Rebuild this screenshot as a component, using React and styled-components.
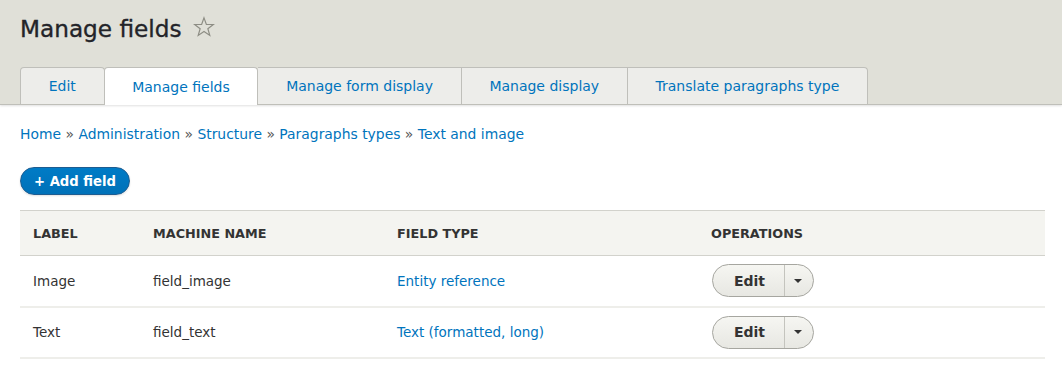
import React from "react";
import styled, { createGlobalStyle } from "styled-components";

const Global = createGlobalStyle`
  html, body { margin: 0; padding: 0; background: #fff; }
  body {
    font-family: "DejaVu Sans", "Liberation Sans", sans-serif;
    color: #222330;
    font-size: 14px;
  }
  * { box-sizing: border-box; }
`;

const Header = styled.header`
  background: #e0e0d8;
  border-bottom: 1px solid #bfbfb9;
  box-shadow: 0 1px 2px rgba(0,0,0,0.12);
  padding: 0 17px 0 20px;
`;

const TitleRow = styled.div`
  display: flex;
  align-items: center;
  gap: 11px;
  height: 56px;
`;

const Title = styled.h1`
  margin: 0;
  font-size: 23.2px;
  font-weight: normal;
  color: #232429;
  -webkit-text-stroke: 0.35px #232429;
`;

const StarBtn = styled.span`
  display: inline-flex;
  width: 22px;
  height: 22px;
  margin-top: -2px;
`;

const Tabs = styled.ul`
  list-style: none;
  margin: 11px 0 0;
  padding: 0;
  display: flex;
  align-items: flex-end;
`;

const Tab = styled.li`
  height: 37px;
  display: flex;
  align-items: center;
  justify-content: center;
  padding: 0 27.7px;
  background: ${p => (p.$active ? "#fff" : "#ededea")};
  border: 1px solid #bfbfba;
  border-bottom: none;
  border-left-width: ${p => (p.$first ? "1px" : "0")};
  border-radius: ${p => (p.$active || p.$first ? "4px 4px 0 0" : p.$last ? "0 4px 0 0" : "0")};
  ${p => (p.$active ? "margin-bottom: -1px; height: 38px; border-left-width: 1px; margin-left: -1px;" : "")}
  color: #0074bd;
  font-size: 14px;
  position: relative;
  z-index: ${p => (p.$active ? 1 : 0)};
`;

const Main = styled.main`
  padding: 20px 17px 0 20px;
`;

const Breadcrumb = styled.nav`
  font-size: 13.9px;
  color: #0074bd;
  line-height: 18px;
  margin: 0 0 24px;
`;

const Sep = styled.span`
  color: #555;
`;

const PrimaryButton = styled.button`
  display: inline-flex;
  align-items: center;
  height: 28px;
  padding: 0 13px;
  border: 1px solid #1e5c90;
  border-radius: 20px;
  background: linear-gradient(#007bc6, #0071b8);
  color: #fff;
  font-family: "DejaVu Sans", sans-serif;
  font-weight: bold;
  font-size: 13.2px;
  box-shadow: 0 1px 2px rgba(0,0,0,0.12);
`;

const Table = styled.table`
  width: 100%;
  margin-top: 15px;
  border-collapse: collapse;
  font-size: 13.5px;
`;

const Th = styled.th`
  text-align: left;
  background: #f4f4f0;
  border-top: 1px solid #d2d2cc;
  border-bottom: 1px solid #d2d2cc;
  height: 45px;
  padding: 0 13px;
  font-size: 12.8px;
  font-weight: bold;
  text-transform: uppercase;
  color: #333;
  width: ${p => p.$w || "auto"};
`;

const Td = styled.td`
  height: 51px;
  padding: 0 13px;
  border-bottom: 2px solid #eeeeea;
  color: #333;
`;

const Link = styled.a`
  color: #0074bd;
  text-decoration: none;
`;

const DropButton = styled.div`
  display: inline-flex;
  height: 33px;
  border: 1px solid #a6a6a0;
  border-radius: 17px;
  background: linear-gradient(#f6f6f2, #e7e7e2);
  overflow: hidden;
  vertical-align: middle;
  margin-left: 1px;
`;

const DropMain = styled.span`
  width: 71px;
  display: flex;
  align-items: center;
  justify-content: center;
  font-weight: bold;
  color: #333;
  font-size: 14px;
  padding-left: 2px;
`;

const DropToggle = styled.span`
  width: 29px;
  border-left: 1px solid #c4c4be;
  display: flex;
  align-items: center;
  justify-content: center;
  &::after {
    content: "";
    border-left: 4.5px solid transparent;
    border-right: 4.5px solid transparent;
    border-top: 4.5px solid #333;
    margin-left: -2px;
  }
`;

const Star = () => (
  <svg width="22" height="22" viewBox="0 0 24 24" fill="none" stroke="#8d8d84" strokeWidth="1.3" strokeLinejoin="miter">
    <polygon points="12,2 14.6,9.2 22.2,9.3 16.2,13.9 18.3,21.2 12,16.9 5.7,21.2 7.8,13.9 1.8,9.3 9.4,9.2" />
  </svg>
);

const tabs = ["Edit", "Manage fields", "Manage form display", "Manage display", "Translate paragraphs type"];
const crumbs = ["Home", "Administration", "Structure", "Paragraphs types", "Text and image"];
const rows = [
  ["Image", "field_image", "Entity reference"],
  ["Text", "field_text", "Text (formatted, long)"],
];

export default function App() {
  return (
    <>
      <Global />
      <Header>
        <TitleRow>
          <Title>Manage fields</Title>
          <StarBtn><Star /></StarBtn>
        </TitleRow>
        <Tabs>
          {tabs.map((t, i) => (
            <Tab key={t} $active={i === 1} $first={i === 0} $last={i === tabs.length - 1}>{t}</Tab>
          ))}
        </Tabs>
      </Header>
      <Main>
        <Breadcrumb>
          {crumbs.map((c, i) => (
            <React.Fragment key={c}>
              {i > 0 && <Sep> » </Sep>}
              {c}
            </React.Fragment>
          ))}
        </Breadcrumb>
        <PrimaryButton>+ Add field</PrimaryButton>
        <Table>
          <thead>
            <tr>
              <Th $w="120px">Label</Th>
              <Th $w="244px">Machine name</Th>
              <Th $w="314px">Field type</Th>
              <Th>Operations</Th>
            </tr>
          </thead>
          <tbody>
            {rows.map(r => (
              <tr key={r[0]}>
                <Td>{r[0]}</Td>
                <Td>{r[1]}</Td>
                <Td><Link href="#">{r[2]}</Link></Td>
                <Td>
                  <DropButton>
                    <DropMain>Edit</DropMain>
                    <DropToggle />
                  </DropButton>
                </Td>
              </tr>
            ))}
          </tbody>
        </Table>
      </Main>
    </>
  );
}
